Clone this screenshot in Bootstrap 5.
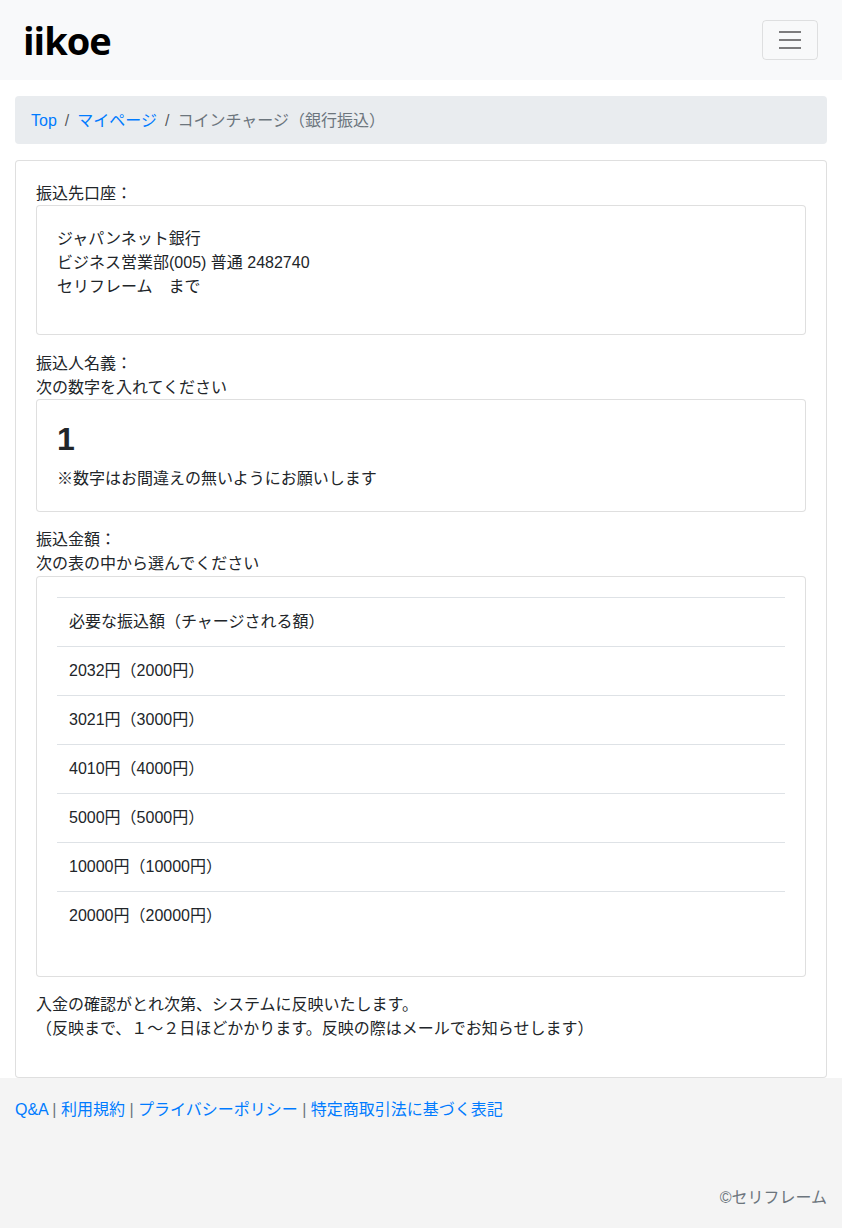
<!DOCTYPE html>
<html lang="ja">
<head>
    <meta charset="UTF-8">
    <meta name="viewport" content="width=device-width, initial-scale=1.0">
    <title>コインチャージ（銀行振込）</title>
    <link href="https://cdn.jsdelivr.net/npm/bootstrap@5.3.0/dist/css/bootstrap.min.css" rel="stylesheet">
    <style>
        body {
            font-family: "Liberation Sans", "Noto Sans CJK JP", sans-serif;
            font-size: 16px;
            line-height: 24px;
            color: #212529;
        }
        a { color: #007bff; text-decoration: none; }
        .top-bar { height: 80px; padding: 0 24px 0 23px; background: #f8f9fa; }
        .logo-text {
            font-family: "Open Sans", sans-serif;
            font-weight: 700;
            font-size: 38px;
            line-height: 40px;
            letter-spacing: -1px;
            color: #000;
            padding: 0;
            margin: 0;
        }
        .top-bar .navbar-toggler { border-radius: 4px; border-color: rgba(0,0,0,.1); }
        .bars-icon { display: block; width: 30px; height: 30px; }
        .crumbs { background: #e9ecef; border-radius: 4px; padding: 13px 16px 11px; margin: 16px 15px; }
        .crumbs .breadcrumb { margin: 0; }
        .crumbs .breadcrumb-item.active { color: #6c757d; }
        .main-card { margin: 0 15px; border-radius: 4px; border-color: rgba(0,0,0,.125); }
        .main-card > .card-body { padding: 20px; }
        .inner-card { border-radius: 4px; margin-bottom: 16px; border-color: rgba(0,0,0,.125); }
        .inner-card .card-body { padding: 20px; }
        /* text sits 1px lower in its line than Liberation Sans puts it */
        .txt-low { padding-top: 1px; margin-bottom: -1px; }
        p.txt-low { margin-bottom: 15px; }
        .big-num { font-size: 32px; font-weight: 700; line-height: 39px; margin-bottom: 8px; }
        .price-table { width: 100%; margin-bottom: 16px; }
        .price-table td { padding: 12px; border-top: 1px solid #dee2e6; }
        .foot-area { background: #f4f4f4; height: 150px; padding: 20px 15px 0; color: #6c757d; }
        .copy-line { margin-top: 64px; text-align: right; }
    </style>
</head>
<body>
    <!-- Header -->
    <nav class="navbar navbar-light top-bar d-flex justify-content-between align-items-center">
        <a class="navbar-brand logo-text" href="#">iikoe</a>
        <button class="navbar-toggler" type="button">
            <svg class="bars-icon" viewBox="0 0 30 30"><path stroke="rgba(0,0,0,.5)" stroke-width="2" d="M4 7h22M4 15h22M4 23h22"/></svg>
        </button>
    </nav>

    <!-- Breadcrumb -->
    <div class="crumbs">
        <ol class="breadcrumb">
            <li class="breadcrumb-item"><a href="#">Top</a></li>
            <li class="breadcrumb-item"><a href="#">マイページ</a></li>
            <li class="breadcrumb-item active">コインチャージ（銀行振込）</li>
        </ol>
    </div>

    <!-- Main -->
    <div class="card main-card">
        <div class="card-body">
            <div class="txt-low">振込先口座：</div>
            <div class="card inner-card">
                <div class="card-body">
                    <p class="txt-low">ジャパンネット銀行<br>ビジネス営業部(005) 普通 2482740<br>セリフレーム　まで</p>
                </div>
            </div>

            <div class="txt-low">振込人名義：<br>次の数字を入れてください</div>
            <div class="card inner-card">
                <div class="card-body">
                    <div class="big-num">1</div>
                    <div>※数字はお間違えの無いようにお願いします</div>
                </div>
            </div>

            <div>振込金額：<br>次の表の中から選んでください</div>
            <div class="card inner-card">
                <div class="card-body">
                    <table class="price-table">
                        <tr><td>必要な振込額（チャージされる額）</td></tr>
                        <tr><td>2032円（2000円）</td></tr>
                        <tr><td>3021円（3000円）</td></tr>
                        <tr><td>4010円（4000円）</td></tr>
                        <tr><td>5000円（5000円）</td></tr>
                        <tr><td>10000円（10000円）</td></tr>
                        <tr><td>20000円（20000円）</td></tr>
                    </table>
                </div>
            </div>

            <p>入金の確認がとれ次第、システムに反映いたします。<br>（反映まで、１～２日ほどかかります。反映の際はメールでお知らせします）</p>
        </div>
    </div>

    <!-- Footer -->
    <footer class="foot-area">
        <div><a href="#">Q&amp;A</a> | <a href="#">利用規約</a> | <a href="#">プライバシーポリシー</a> | <a href="#">特定商取引法に基づく表記</a></div>
        <div class="copy-line">©セリフレーム</div>
    </footer>

    <script src="https://cdn.jsdelivr.net/npm/bootstrap@5.3.0/dist/js/bootstrap.bundle.min.js"></script>
</body>
</html>
